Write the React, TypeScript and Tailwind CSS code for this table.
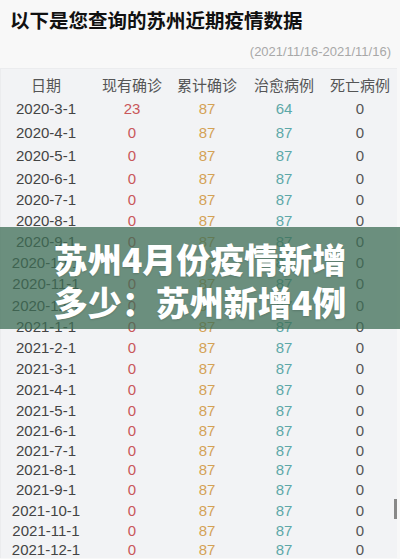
import React from "react";

type Row = { d: string; a: string; b: string; c: string; e: string; h: string };

const rows: Row[] = [
  { d: "2020-3-1", a: "23", b: "87", c: "64", e: "0", h: "h-[23px]" },
  { d: "2020-4-1", a: "0", b: "87", c: "87", e: "0", h: "h-[24px]" },
  { d: "2020-5-1", a: "0", b: "87", c: "87", e: "0", h: "h-[23px]" },
  { d: "2020-6-1", a: "0", b: "87", c: "87", e: "0", h: "h-[21px]" },
  { d: "2020-7-1", a: "0", b: "87", c: "87", e: "0", h: "h-[21px]" },
  { d: "2020-8-1", a: "0", b: "87", c: "87", e: "0", h: "h-[21px]" },
  { d: "2020-9-1", a: "0", b: "87", c: "87", e: "0", h: "h-[21px]" },
  { d: "2020-10-1", a: "0", b: "87", c: "87", e: "0", h: "h-[21px]" },
  { d: "2020-11-1", a: "0", b: "87", c: "87", e: "0", h: "h-[22px]" },
  { d: "2020-12-1", a: "0", b: "87", c: "87", e: "0", h: "h-[21px]" },
  { d: "2021-1-1", a: "0", b: "87", c: "87", e: "0", h: "h-[21px]" },
  { d: "2021-2-1", a: "0", b: "87", c: "87", e: "0", h: "h-[21px]" },
  { d: "2021-3-1", a: "0", b: "87", c: "87", e: "0", h: "h-[21px]" },
  { d: "2021-4-1", a: "0", b: "87", c: "87", e: "0", h: "h-[21px]" },
  { d: "2021-5-1", a: "0", b: "87", c: "87", e: "0", h: "h-[20px]" },
  { d: "2021-6-1", a: "0", b: "87", c: "87", e: "0", h: "h-[20px]" },
  { d: "2021-7-1", a: "0", b: "87", c: "87", e: "0", h: "h-[19px]" },
  { d: "2021-8-1", a: "0", b: "87", c: "87", e: "0", h: "h-[20px]" },
  { d: "2021-9-1", a: "0", b: "87", c: "87", e: "0", h: "h-[21px]" },
  { d: "2021-10-1", a: "0", b: "87", c: "87", e: "0", h: "h-[20px]" },
  { d: "2021-11-1", a: "0", b: "87", c: "87", e: "0", h: "h-[19px]" },
  { d: "2021-12-1", a: "0", b: "87", c: "87", e: "0", h: "h-[19px]" },
];

const grid = "grid grid-cols-[96px_76px_74px_80px_72px] items-center";

export default function App() {
  return (
    <div
      className="relative w-[400px] h-[559px] overflow-hidden bg-[#f8f8f8]"
      style={{ fontFamily: '"Liberation Sans", "Noto Sans CJK SC", sans-serif' }}
    >
      <div className="flex flex-col">
        <div
          className="pl-[10px] pt-[7px] text-[19.5px] leading-[26px] font-bold text-[#111]"
          style={{ fontFamily: '"Noto Sans CJK SC", sans-serif' }}
        >
          以下是您查询的苏州近期疫情数据
        </div>
        <div className="mt-[10px] pr-[9px] text-right text-[13px] leading-[18px] text-[#a8a8a8]">
          (2021/11/16-2021/11/16)
        </div>
        <div className="mt-[7px] mx-[3px] pt-[6px] bg-[#f2f3f5] border-l border-t border-[#ebecee] -ml-[0px]">
          <div className={`${grid} h-[23px] text-[15px] text-[#555] -ml-[3px]`}>
            <div className="text-center">日期</div>
            <div className="text-center">现有确诊</div>
            <div className="text-center">累计确诊</div>
            <div className="text-center">治愈病例</div>
            <div className="text-center">死亡病例</div>
          </div>
          {rows.map((r) => (
            <div key={r.d} className={`${grid} ${r.h} text-[15px] -ml-[3px]`}>
              <div className="text-center text-[#444]">{r.d}</div>
              <div className="text-center text-[#c9575a]">{r.a}</div>
              <div className="text-center text-[#d4a255]">{r.b}</div>
              <div className="text-center text-[#5da8a8]">{r.c}</div>
              <div className="text-center text-[#555]">{r.e}</div>
            </div>
          ))}
        </div>
      </div>

      <div className="absolute left-0 right-0 top-[227px] h-[102px] bg-[rgba(61,109,85,0.75)] flex flex-col items-center pt-[10px]">
        <div
          className="text-white font-black text-[34px] leading-[43px] text-center"
          style={{
            fontFamily: '"Noto Sans CJK SC", sans-serif',
            textShadow: "0 1px 2px rgba(0,0,0,0.15)",
          }}
        >
          <div>苏州4月份疫情新增</div>
          <div>多少：苏州新增4例</div>
        </div>
      </div>

      <div className="absolute left-[394px] top-[499px] w-[3px] h-[20px] bg-[#888]" />
    </div>
  );
}
